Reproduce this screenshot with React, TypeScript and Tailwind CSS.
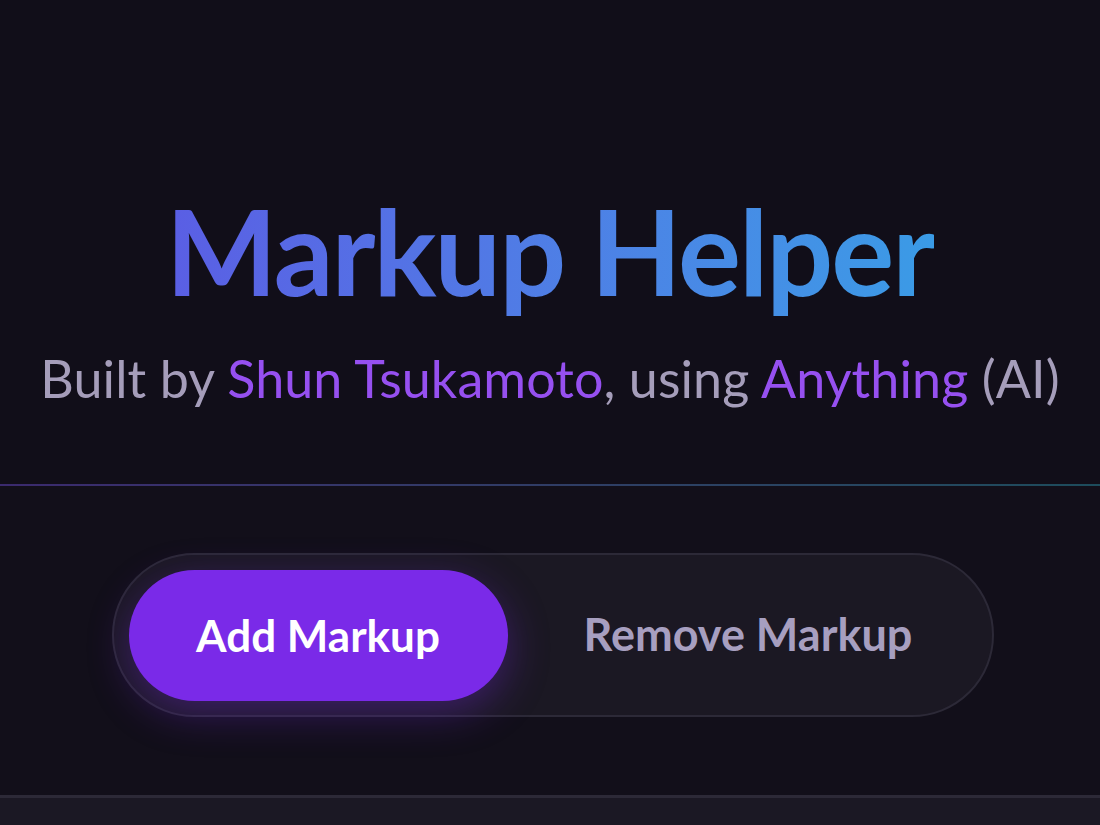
import React from "react";

export default function App() {
  return (
    <div className="w-[1100px] h-[825px] overflow-hidden bg-[#110e19] flex flex-col" style={{ fontFamily: "Lato, 'Noto Sans', sans-serif" }}>
      <header className="flex flex-col items-center pt-[184px] h-[484px] shrink-0">
        <h1 className="text-[118px] leading-[134px] font-bold tracking-[-2px] bg-gradient-to-r from-[#5a5ee4] to-[#3a9be6] bg-clip-text text-transparent">
          Markup Helper
        </h1>
        <p className="mt-[30px] text-[52px] leading-[60px] text-[#a59dba] tracking-[0.1px]">
          Built by <span className="text-[#9650f0]">Shun Tsukamoto</span>, using{" "}
          <span className="text-[#9650f0]">Anything</span> (AI)
        </p>
      </header>
      <div className="h-[2px] shrink-0 bg-gradient-to-r from-[#3b2a6e] to-[#1d4c5c]" />
      <section className="flex-1 flex justify-center pt-[67px] pl-[5px] bg-[#120f1a]">
        <div className="w-[882px] h-[164px] rounded-full border-2 border-[#2c2937] bg-[#1b1823] p-[15px] flex items-center">
          <button className="w-[379px] h-[131px] rounded-full bg-[#7a2ae8] text-white text-[44px] font-bold shadow-[0_12px_40px_rgba(124,42,232,0.35)]">
            Add Markup
          </button>
          <button className="flex-1 h-[131px] rounded-full text-[#a79fc0] text-[45px] font-bold pl-[12px]">
            Remove Markup
          </button>
        </div>
      </section>
      <div className="h-[30px] border-t-[3px] border-[#2c2937] bg-[#1b1824] shrink-0" />
    </div>
  );
}
